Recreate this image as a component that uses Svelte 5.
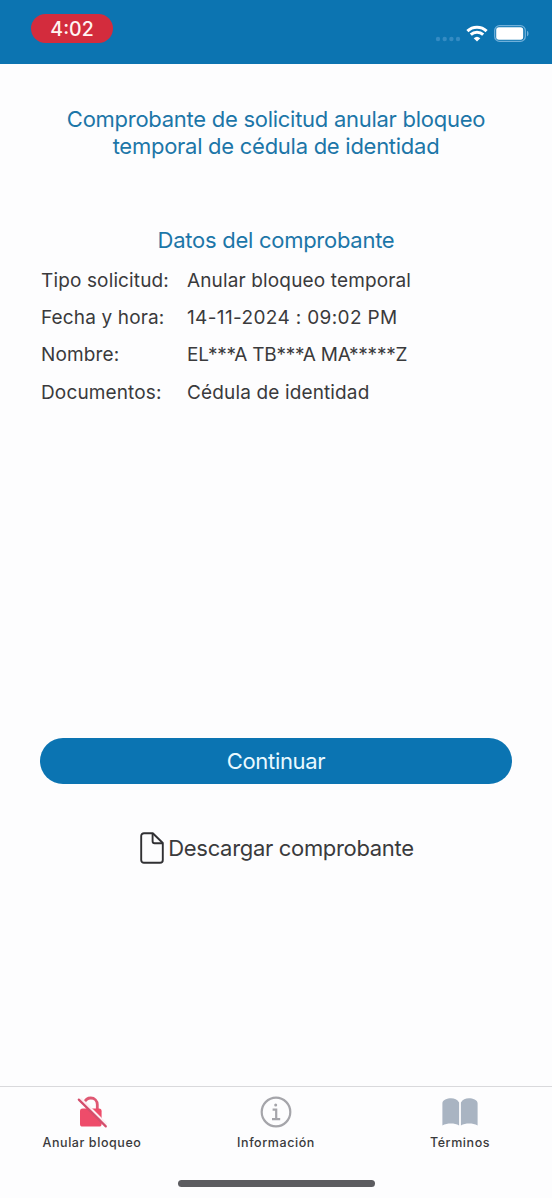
<script lang="ts">
  const rows = [
    { label: "Tipo solicitud:", value: "Anular bloqueo temporal", name: "tipo" },
    { label: "Fecha y hora:", value: "14-11-2024 : 09:02 PM", name: "fecha" },
    { label: "Nombre:", value: "EL***A TB***A MA*****Z", name: "nombre" },
    { label: "Documentos:", value: "Cédula de identidad", name: "documentos" },
  ];
</script>

<div class="screen">
  <header>
    <span class="time">4:02</span>
    <div class="status">
      <svg class="signal" viewBox="0 0 26 6">
        <circle cx="3" cy="3" r="2.2" />
        <circle cx="9.7" cy="3" r="2.2" />
        <circle cx="16.4" cy="3" r="2.2" />
        <circle cx="23" cy="3" r="2.2" />
      </svg>
      <svg class="wifi" viewBox="0 0 22 17">
        <path d="M1.4 6.1a13.8 13.8 0 0 1 19.2 0" />
        <path d="M4.8 9.7a9 9 0 0 1 12.4 0" />
        <path class="dot" d="M11 16.6l-3.3-3.4a4.8 4.8 0 0 1 6.6 0z" />
      </svg>
      <svg class="battery" viewBox="0 0 36 17">
        <rect class="frame" x="0.7" y="0.7" width="30.6" height="15.6" rx="4.8" />
        <rect x="2.2" y="2.3" width="27" height="12.4" rx="2.6" />
        <path class="cap" d="M33 5.7c2 .8 2 4.8 0 5.6z" />
      </svg>
    </div>
  </header>

  <main>
    <h1>Comprobante de solicitud anular bloqueo<br />temporal de cédula de identidad</h1>
    <h2>Datos del comprobante</h2>
    <dl>
      {#each rows as row}
        <dt>{row.label}</dt>
        <dd class={row.name}>{row.value}</dd>
      {/each}
    </dl>
    <button class="primary">Continuar</button>
    <button class="download">
      <svg viewBox="0 0 24 32">
        <path d="M4 1.2h8.8L22.8 11v17a2.8 2.8 0 0 1-2.8 2.8H4A2.8 2.8 0 0 1 1.2 28V4A2.8 2.8 0 0 1 4 1.2z" />
        <path d="M12.6 1.4v7.8a2 2 0 0 0 2 2h8" />
      </svg>
      <span>Descargar comprobante</span>
    </button>
  </main>

  <nav>
    <div class="tab">
      <svg viewBox="0 0 32 32">
        <path class="shackle" d="M8.4 6.6C9.4 3.6 12 2 14.8 2c3.7 0 6.5 2.8 6.5 6.600V14" />
        <rect class="lock" x="4" y="12.6" width="21.6" height="18" rx="2.6" />
        <path class="gap" d="M4.6 2.4l26 26" />
        <path class="slash" d="M2.8 3.6L29.8 30.4" />
      </svg>
      <span>Anular bloqueo</span>
    </div>
    <div class="tab">
      <svg viewBox="0 0 32 32">
        <circle class="ring" cx="16" cy="16" r="14.3" />
        <circle class="point" cx="15.7" cy="9" r="1.5" />
        <path class="stem" d="M12.6 13.6h3.6v9.6M12 23.2h8.2" />
      </svg>
      <span>Información</span>
    </div>
    <div class="tab">
      <svg class="book" viewBox="0 0 36 28">
        <path d="M17.1 4.4C15.4 1.6 12.4.3 9.2.3 5.200.3.4 2.200.4 5.200v22.200c5-2.600 12-2.600 16.700 0z" />
        <path d="M18.9 4.4C20.600 1.600 23.600.3 26.800.3c4 0 8.800 1.900 8.800 4.900v22.200c-5-2.600-12-2.600-16.700 0z" />
      </svg>
      <span>Términos</span>
    </div>
  </nav>
  <footer><div class="home"></div></footer>
</div>

<style>
  :global(body) {
    margin: 0;
  }
  .screen {
    display: flex;
    flex-direction: column;
    width: 552px;
    height: 1198px;
    overflow: hidden;
    background: #fdfdfe;
    color: #3a3a3c;
    font-family: Inter, "Liberation Sans", sans-serif;
  }
  header {
    display: flex;
    justify-content: space-between;
    align-items: flex-start;
    box-sizing: border-box;
    flex: none;
    height: 64px;
    padding: 14px 24px 0 31px;
    background: #0c74b1;
  }
  .time {
    width: 82px;
    height: 29px;
    border-radius: 15px;
    background: #d32c3d;
    color: #fff4f2;
    font-size: 19.5px;
    font-weight: 500;
    line-height: 30px;
    text-align: center;
  }
  .status {
    display: flex;
    align-items: center;
    padding-top: 11px;
  }
  .status svg {
    display: block;
    fill: #fff;
  }
  .status .signal {
    width: 26px;
    height: 6px;
    margin: 10px 5px 0 0;
    fill: #348bc3;
  }
  .wifi {
    width: 22px;
    height: 17px;
    margin-right: 6px;
  }
  .wifi path {
    fill: none;
    stroke: #fff;
    stroke-width: 3;
  }
  .wifi .dot {
    fill: #fff;
    stroke: none;
  }
  .battery {
    width: 36px;
    height: 17px;
    margin-right: -2px;
  }
  .battery .frame {
    fill: none;
    stroke: #70b0da;
    stroke-width: 1.3;
  }
  .battery .cap {
    fill: #70b0da;
  }
  main {
    display: flex;
    flex-direction: column;
    flex: 1;
    padding: 42px 40px 0;
  }
  h1,
  h2 {
    margin: 0;
    color: #1c76a8;
    font-size: 22px;
    font-weight: 400;
    line-height: 27px;
    letter-spacing: -0.27px;
    text-align: center;
    white-space: nowrap;
  }
  h2 {
    margin-top: 67px;
  }
  dl {
    display: grid;
    grid-template-columns: 146px 1fr;
    grid-auto-rows: 37.4px;
    align-items: center;
    margin: 7.5px 0 0;
    padding-left: 1px;
    font-size: 19px;
    letter-spacing: 0.14px;
    white-space: nowrap;
  }
  dd {
    margin: 0;
  }
  .fecha {
    letter-spacing: 0.36px;
  }
  .nombre {
    letter-spacing: -0.24px;
  }
  button {
    border: none;
    padding: 0;
    background: none;
    font-family: inherit;
    font-size: 22px;
    letter-spacing: -0.32px;
  }
  .primary {
    height: 46px;
    margin-top: 326.5px;
    border-radius: 23px;
    background: #0b74b2;
    color: #e9f9ff;
  }
  .download {
    display: flex;
    align-items: center;
    align-self: center;
    gap: 4px;
    height: 34px;
    margin-top: 47px;
    padding-left: 2px;
    color: #3a3a3c;
  }
  .download svg {
    width: 24px;
    height: 32px;
    fill: none;
    stroke: #303033;
    stroke-width: 1.9;
    stroke-linejoin: round;
  }
  nav {
    display: grid;
    grid-template-columns: repeat(3, 1fr);
    flex: none;
    height: 93px;
    border-top: 1px solid #d9d9dc;
  }
  .tab {
    display: flex;
    flex-direction: column;
    align-items: center;
    gap: 6px;
    padding-top: 9px;
    font-size: 12.5px;
    font-weight: 500;
    line-height: 18px;
    letter-spacing: 0.58px;
  }
  .tab svg {
    width: 32px;
    height: 32px;
    fill: none;
  }
  .shackle {
    stroke: #df5873;
    stroke-width: 2.8;
  }
  .lock {
    fill: #ee4c6a;
  }
  .gap {
    stroke: #fdeef2;
    stroke-width: 2.2;
  }
  .slash {
    stroke: #d34e6c;
    stroke-width: 2.2;
    stroke-linecap: round;
  }
  .ring,
  .stem {
    stroke: #a5a5aa;
    stroke-width: 2.2;
  }
  .point {
    fill: #a5a5aa;
  }
  .tab .book {
    width: 36px;
    height: 28px;
    margin: 2px 1px 2px 0;
    fill: #a9b4c2;
  }
  footer {
    display: flex;
    justify-content: center;
    flex: none;
    height: 18px;
  }
  .home {
    width: 197px;
    height: 7px;
    border-radius: 4px;
    background: #5c5c60;
  }
</style>
